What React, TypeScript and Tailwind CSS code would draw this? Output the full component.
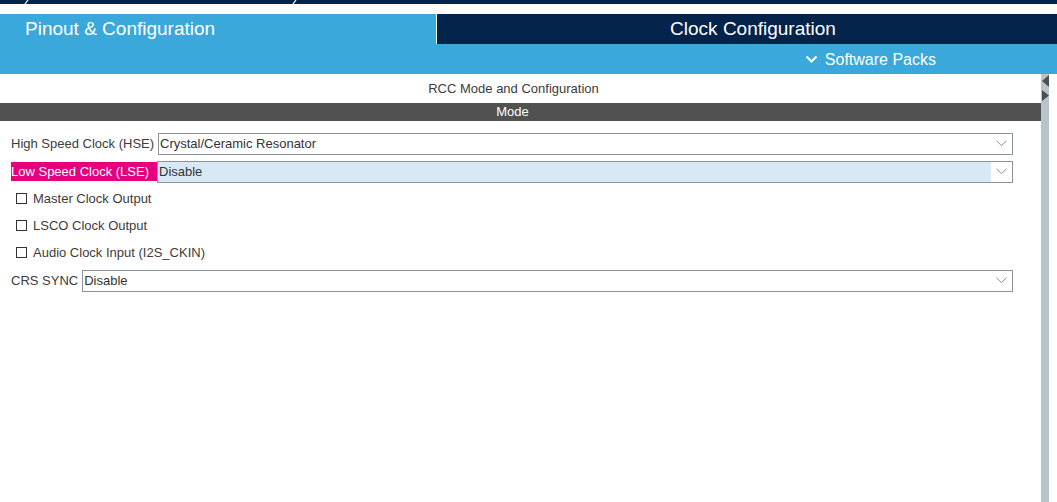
import React from 'react'

const FONT = "font-['Liberation_Sans',Arial,sans-serif]"

function Chevron() {
  return (
    <svg width="11" height="7" viewBox="0 0 11 7" className="shrink-0">
      <polyline points="0.5,0.8 5.5,5.6 10.5,0.8" fill="none" stroke="#8a8f94" strokeWidth="1" />
    </svg>
  )
}

function Select({ value, active = false }: { value: string; active?: boolean }) {
  return (
    <div className="flex-1 h-[22px] border border-[#8c949a] flex bg-white">
      <div className={`flex-1 flex items-center pl-[1px] text-[13px] text-[#333] ${active ? 'bg-[#d9e8f5]' : ''}`}>
        {value}
      </div>
      <div className="w-[21px] flex items-center justify-start pl-[5px]">
        <Chevron />
      </div>
    </div>
  )
}

function CheckRow({ label }: { label: string }) {
  return (
    <div className="h-[27px] flex items-center pl-[5px] gap-[6px]">
      <div className="w-[11px] h-[11px] border border-[#333] bg-white" />
      <span className="text-[13px] text-[#3c3c3c]">{label}</span>
    </div>
  )
}

export default function App() {
  return (
    <div className={`w-[1057px] h-[502px] overflow-hidden bg-white flex flex-col ${FONT}`}>
      {/* top strip */}
      <div className="h-[4px] bg-[#03234b] relative">
        <svg width="6" height="4" className="absolute left-[24px] top-0">
          <line x1="1" y1="4" x2="4" y2="0" stroke="#fff" strokeWidth="1.2" />
        </svg>
        <svg width="6" height="4" className="absolute left-[292px] top-0">
          <line x1="1" y1="4" x2="4" y2="0" stroke="#fff" strokeWidth="1.2" />
        </svg>
      </div>
      <div className="h-[10px]" />

      {/* tabs */}
      <div className="flex h-[30px]">
        <div className="w-[437px] bg-[#3aa8db] border-r border-white text-white text-[19px] pl-[25px] flex items-center">
          Pinout &amp; Configuration
        </div>
        <div className="flex-1 bg-[#03234b] text-white text-[19px] flex items-center justify-center pl-[12px]">
          Clock Configuration
        </div>
      </div>
      <div className="h-[30px] bg-[#3aa8db] text-white text-[16px] flex items-center justify-end pr-[121px] pt-[1px] gap-[7px]">
        <svg width="13" height="9" viewBox="0 0 13 9">
          <polyline points="1.5,1.5 6.5,6.5 11.5,1.5" fill="none" stroke="#fff" strokeWidth="2.2" />
        </svg>
        <span>Software Packs</span>
      </div>

      {/* content */}
      <div className="flex-1 flex">
        <div className="w-[1041px] flex flex-col">
          <div className="h-[29px] flex items-center justify-center pr-[14px] text-[13px] text-[#3c3c3c]">
            RCC Mode and Configuration
          </div>
          <div className="h-[18px] bg-[#505250] text-white text-[13px] flex items-center justify-center pr-[16px]">
            Mode
          </div>
          <div className="pl-[11px] pr-[28px] pt-[9px] flex flex-col">
            <div className="h-[28px] flex items-center pb-[1px]">
              <span className="w-[147px] text-[13px] text-[#3c3c3c]">High Speed Clock (HSE)</span>
              <Select value="Crystal/Ceramic Resonator" />
            </div>
            <div className="h-[27px] flex items-center">
              <span className="w-[146px] h-[19px] flex items-center bg-[#e6007e] text-white text-[13px]">
                Low Speed Clock (LSE)
              </span>
              <Select value="Disable" active />
            </div>
            <CheckRow label="Master Clock Output" />
            <CheckRow label="LSCO Clock Output" />
            <CheckRow label="Audio Clock Input (I2S_CKIN)" />
            <div className="h-[27px] flex items-center mt-[1px]">
              <span className="pr-[4px] text-[13px] text-[#3c3c3c]">CRS SYNC</span>
              <Select value="Disable" />
            </div>
          </div>
        </div>

        {/* splitter bar */}
        <div className="w-[8px] bg-[#b8c4cb] flex flex-col items-center pt-[1px] gap-[3px]">
          <svg width="7" height="12" viewBox="0 0 7 12">
            <polygon points="7,0 0,6 7,12" fill="#4a4f52" />
          </svg>
          <svg width="7" height="11" viewBox="0 0 7 11">
            <polygon points="0,0 7,5.5 0,11" fill="#4a4f52" />
          </svg>
        </div>
        <div className="flex-1" />
      </div>
    </div>
  )
}
